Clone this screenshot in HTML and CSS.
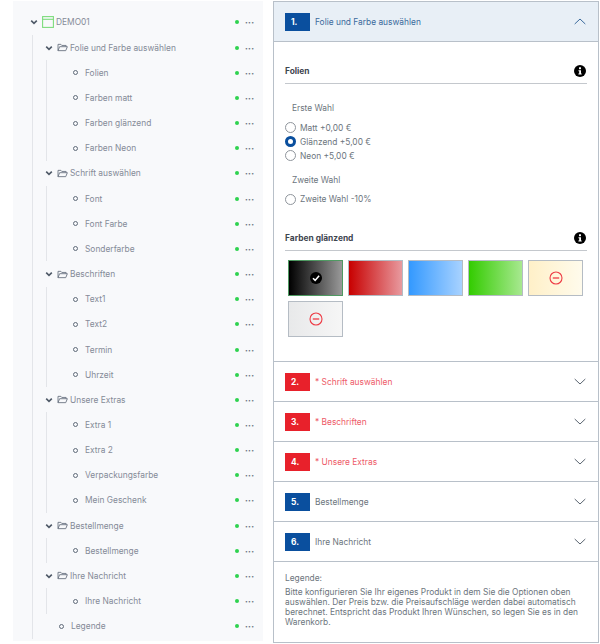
FILE: index.html
```html
<!DOCTYPE html>
<html lang="de">
<head>
	<meta charset="UTF-8">
	<title>Konfigurator</title>
	<link rel="stylesheet" href="styles.css">
</head>
<body>
	<svg class="defs" width="0" height="0">
		<symbol id="i-chev" viewBox="0 0 10 10"><path d="M1.5 3.2 5 6.7l3.5-3.5" fill="none" stroke="currentColor" stroke-width="2"/></symbol>
		<symbol id="i-folder" viewBox="0 0 12 10"><path d="M1 8.5V1.5h3.2l1 1.2H10v1.4M1 8.5l1.8-4.4H11.4L9.6 8.5z" fill="none" stroke="currentColor" stroke-width="1" stroke-linejoin="round"/></symbol>
		<symbol id="i-up" viewBox="0 0 12 7"><path d="M.7 6 6 1l5.3 5" fill="none" stroke="currentColor" stroke-width="1"/></symbol>
		<symbol id="i-down" viewBox="0 0 12 7"><path d="M.7 1 6 6l5.3-5" fill="none" stroke="currentColor" stroke-width="1"/></symbol>
		<symbol id="i-info" viewBox="0 0 12 12"><circle cx="6" cy="6" r="6" fill="#000"/><rect x="5" y="2.3" width="2" height="1.9" fill="#fff"/><path d="M4.5 5.2H7v3.4h.7v1H4.4v-1h.8V6.200H4.500z" fill="#fff"/></symbol>
		<symbol id="i-minus" viewBox="0 0 14 14"><circle cx="7" cy="7" r="6" fill="none" stroke="currentColor" stroke-width="1.100"/><path d="M3.800 7h6.400" stroke="currentColor" stroke-width="1.300"/></symbol>
	</svg>

	<div class="tree">
		<div class="row">
			<svg class="chev"><use href="#i-chev"/></svg>
			<svg class="window" viewBox="0 0 12 12"><rect x=".6" y=".6" width="10.800" height="10.800" fill="none" stroke="#7ddc7d" stroke-width="1.100"/><path d="M.6 3.300h10.800" stroke="#7ddc7d" stroke-width="1.100"/></svg>
			<span class="label">DEMO01</span>
			<i class="dot"></i><span class="more">•••</span>
		</div>
		<ul class="level1">
			<li>
				<div class="row"><svg class="chev"><use href="#i-chev"/></svg><svg class="folder"><use href="#i-folder"/></svg><span class="label">Folie und Farbe auswählen</span><i class="dot"></i><span class="more">•••</span></div>
				<ul class="level2">
					<li class="row leaf"><b class="ring"></b><span class="label">Folien</span><i class="dot"></i><span class="more">•••</span></li>
					<li class="row leaf"><b class="ring"></b><span class="label">Farben matt</span><i class="dot"></i><span class="more">•••</span></li>
					<li class="row leaf"><b class="ring"></b><span class="label">Farben glänzend</span><i class="dot"></i><span class="more">•••</span></li>
					<li class="row leaf"><b class="ring"></b><span class="label">Farben Neon</span><i class="dot"></i><span class="more">•••</span></li>
				</ul>
			</li>
			<li>
				<div class="row"><svg class="chev"><use href="#i-chev"/></svg><svg class="folder"><use href="#i-folder"/></svg><span class="label">Schrift auswählen</span><i class="dot"></i><span class="more">•••</span></div>
				<ul class="level2">
					<li class="row leaf"><b class="ring"></b><span class="label">Font</span><i class="dot"></i><span class="more">•••</span></li>
					<li class="row leaf"><b class="ring"></b><span class="label">Font Farbe</span><i class="dot"></i><span class="more">•••</span></li>
					<li class="row leaf"><b class="ring"></b><span class="label">Sonderfarbe</span><i class="dot"></i><span class="more">•••</span></li>
				</ul>
			</li>
			<li>
				<div class="row"><svg class="chev"><use href="#i-chev"/></svg><svg class="folder"><use href="#i-folder"/></svg><span class="label">Beschriften</span><i class="dot"></i><span class="more">•••</span></div>
				<ul class="level2">
					<li class="row leaf"><b class="ring"></b><span class="label">Text1</span><i class="dot"></i><span class="more">•••</span></li>
					<li class="row leaf"><b class="ring"></b><span class="label">Text2</span><i class="dot"></i><span class="more">•••</span></li>
					<li class="row leaf"><b class="ring"></b><span class="label">Termin</span><i class="dot"></i><span class="more">•••</span></li>
					<li class="row leaf"><b class="ring"></b><span class="label">Uhrzeit</span><i class="dot"></i><span class="more">•••</span></li>
				</ul>
			</li>
			<li>
				<div class="row"><svg class="chev"><use href="#i-chev"/></svg><svg class="folder"><use href="#i-folder"/></svg><span class="label">Unsere Extras</span><i class="dot"></i><span class="more">•••</span></div>
				<ul class="level2">
					<li class="row leaf"><b class="ring"></b><span class="label">Extra 1</span><i class="dot"></i><span class="more">•••</span></li>
					<li class="row leaf"><b class="ring"></b><span class="label">Extra 2</span><i class="dot"></i><span class="more">•••</span></li>
					<li class="row leaf"><b class="ring"></b><span class="label">Verpackungsfarbe</span><i class="dot"></i><span class="more">•••</span></li>
					<li class="row leaf"><b class="ring"></b><span class="label">Mein Geschenk</span><i class="dot"></i><span class="more">•••</span></li>
				</ul>
			</li>
			<li>
				<div class="row"><svg class="chev"><use href="#i-chev"/></svg><svg class="folder"><use href="#i-folder"/></svg><span class="label">Bestellmenge</span><i class="dot"></i><span class="more">•••</span></div>
				<ul class="level2">
					<li class="row leaf"><b class="ring"></b><span class="label">Bestellmenge</span><i class="dot"></i><span class="more">•••</span></li>
				</ul>
			</li>
			<li>
				<div class="row"><svg class="chev"><use href="#i-chev"/></svg><svg class="folder"><use href="#i-folder"/></svg><span class="label">Ihre Nachricht</span><i class="dot"></i><span class="more">•••</span></div>
				<ul class="level2">
					<li class="row leaf"><b class="ring"></b><span class="label">Ihre Nachricht</span><i class="dot"></i><span class="more">•••</span></li>
				</ul>
			</li>
			<li class="row single"><b class="ring"></b><span class="label">Legende</span><i class="dot"></i><span class="more">•••</span></li>
		</ul>
	</div>

	<div class="config">
		<div class="head open">
			<span class="num">1.</span>
			<span class="title">Folie und Farbe auswählen</span>
			<svg class="arrow"><use href="#i-up"/></svg>
		</div>
		<div class="body">
			<div class="group-title"><span>Folien</span><svg class="info"><use href="#i-info"/></svg></div>
			<p class="sub first-sub">Erste Wahl</p>
			<div class="radio"><i class="circle"></i>Matt +0,00 €</div>
			<div class="radio"><i class="circle on"></i>Glänzend +5,00 €</div>
			<div class="radio"><i class="circle"></i>Neon +5,00 €</div>
			<p class="sub">Zweite Wahl</p>
			<div class="radio"><i class="circle"></i>Zweite Wahl -10%</div>
			<div class="group-title second"><span>Farben glänzend</span><svg class="info"><use href="#i-info"/></svg></div>
			<div class="swatches">
				<div class="swatch black"><span class="check"><svg viewBox="0 0 10 10"><path d="M2.500 5.200 4.300 7 7.600 3.200" fill="none" stroke="#fff" stroke-width="1.300"/></svg></span></div>
				<div class="swatch red"></div>
				<div class="swatch blue"></div>
				<div class="swatch green"></div>
				<div class="swatch cream"><svg class="minus"><use href="#i-minus"/></svg></div>
				<div class="swatch grey"><svg class="minus"><use href="#i-minus"/></svg></div>
			</div>
		</div>
		<div class="head required"><span class="num">2.</span><span class="title">* Schrift auswählen</span><svg class="arrow"><use href="#i-down"/></svg></div>
		<div class="head required"><span class="num">3.</span><span class="title">* Beschriften</span><svg class="arrow"><use href="#i-down"/></svg></div>
		<div class="head required"><span class="num">4.</span><span class="title">* Unsere Extras</span><svg class="arrow"><use href="#i-down"/></svg></div>
		<div class="head"><span class="num">5.</span><span class="title">Bestellmenge</span><svg class="arrow"><use href="#i-down"/></svg></div>
		<div class="head"><span class="num">6.</span><span class="title">Ihre Nachricht</span><svg class="arrow"><use href="#i-down"/></svg></div>
		<div class="legend">
			<p class="legend-title">Legende:</p>
			<p>Bitte konfigurieren Sie Ihr eigenes Produkt in dem Sie die Optionen oben auswählen. Der Preis bzw. die Preisaufschläge werden dabei automatisch berechnet. Entspricht das Produkt Ihren Wünschen, so legen Sie es in den Warenkorb.</p>
		</div>
	</div>
</body>
</html>
```

FILE: styles.css
```css
*{
	margin: 0;
	padding: 0;
	box-sizing: border-box;
}
ul li{
	list-style-type: none;
}
body{
	display: flex;
	align-items: flex-start;
	gap: 10px;
	padding: 1px 0 0 13px;
	font-family: Inter, "Liberation Sans", sans-serif;
	font-size: 8.4px;
	color: #6c757d;
	background: #fff;
}
.defs{
	position: absolute;
}

/* tree */
.tree{
	width: 250px;
	height: 640px;
	padding: 8.9px 8px 0 17px;
	background: #f8f9fb;
}
.row{
	display: flex;
	align-items: center;
	height: 25.17px;
}
.label{
	flex: 1;
	color: #858b98;
	white-space: nowrap;
}
.chev{
	flex: none;
	width: 8px;
	height: 8px;
	margin-right: 4px;
	color: #4f5a68;
}
.window{
	flex: none;
	width: 12px;
	height: 12px;
	margin-right: 2px;
}
.folder{
	flex: none;
	width: 11px;
	height: 9px;
	margin-right: 2px;
	color: #6b7482;
}
.dot{
	width: 4px;
	height: 4px;
	margin-right: 6.500px;
	border-radius: 50%;
	background: #2fd24f;
}
.more{
	width: 10px;
	font-size: 5px;
	letter-spacing: .3px;
	color: #6b7482;
	white-space: nowrap;
}
.ring{
	flex: none;
	width: 5px;
	height: 5px;
	margin-right: 7px;
	border: 1.6px solid #5f6a78;
	border-radius: 50%;
}
.level1{
	margin-left: 2px;
	padding-left: 12px;
	height: 604px;
	border-left: 1px solid #e3e5e9;
}
.level2{
	margin-left: 1px;
	border-left: 1px solid #e3e5e9;
}
.leaf{
	padding-left: 26px;
}
.single{
	padding-left: 14px;
}

/* accordion */
.config{
	width: 326px;
	height: 642px;
	border: 1px solid #b8c0c9;
}
.head{
	display: flex;
	align-items: center;
	height: 40px;
	padding: 0 12px 0 11px;
	border-top: 1px solid #b8c0c9;
}
.head.open{
	border-top: 0;
	border-bottom: 1px solid #b8c0c9;
	background: #e8eff6;
}
.num{
	width: 25px;
	height: 18px;
	margin-right: 5px;
	padding-left: 6px;
	font-weight: 700;
	line-height: 18px;
	color: #fff;
	background: #0a4f9e;
}
.title{
	flex: 1;
	color: #6c757d;
}
.open .title{
	color: #3b6a9c;
}
.required .num{
	background: #e8212b;
}
.required .title{
	color: #ee5a68;
}
.arrow{
	width: 12px;
	height: 7px;
	color: #5a6470;
}
.open .arrow{
	color: #3b6a9c;
}
.body{
	height: 319px;
	padding: 20px 11px 0;
}
.group-title{
	display: flex;
	justify-content: space-between;
	align-items: center;
	height: 22px;
	padding-bottom: 4px;
	font-weight: 700;
	color: #3f4650;
	border-bottom: 1px solid #c4c8cd;
}
.group-title.second{
	margin-top: 23px;
}
.info{
	width: 12px;
	height: 12px;
	margin-right: 1px;
}
.sub{
	padding: 12px 0 6.500px 7px;
	line-height: 11px;
}
.first-sub{
	padding-top: 19px;
}
.radio{
	display: flex;
	align-items: center;
	gap: 4px;
	height: 14px;
}
.circle{
	width: 11px;
	height: 11px;
	border: 1px solid #8f959c;
	border-radius: 50%;
	background: #fff;
}
.circle.on{
	border: 3px solid #0a4f9e;
}
.swatches{
	display: flex;
	flex-wrap: wrap;
	gap: 5px;
	margin-top: 8.500px;
	padding-left: 3px;
}
.swatch{
	display: flex;
	align-items: center;
	justify-content: center;
	width: 55px;
	height: 36px;
	border: 1px solid #b5bcc4;
}
.black{
	border-color: #4f9a62;
	background: linear-gradient(90deg, #000, #999);
}
.red{
	background: linear-gradient(90deg, #c80000, #e89a9f);
}
.blue{
	background: linear-gradient(90deg, #3399ff, #a8d2ff);
}
.green{
	background: linear-gradient(90deg, #33cc00, #a8e890);
}
.cream{
	background: linear-gradient(90deg, #fff0c8, #fffbec);
}
.grey{
	background: linear-gradient(90deg, #e8e9ea, #f6f6f6);
}
.check{
	display: block;
	width: 12px;
	height: 12px;
	border-radius: 50%;
	background: #000;
}
.check svg{
	display: block;
	width: 12px;
	height: 12px;
}
.minus{
	width: 14px;
	height: 14px;
	color: #ee3b45;
}
.legend{
	padding: 11px 11px 0;
	border-top: 1px solid #b8c0c9;
	line-height: 10px;
}
.legend-title{
	margin-bottom: 4px;
}
```
